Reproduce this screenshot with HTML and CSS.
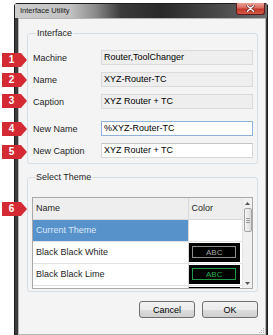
FILE: index.html
```html
<!DOCTYPE html>
<html lang="en">
<head>
    <meta charset="UTF-8">
    <meta name="viewport" content="width=device-width, initial-scale=1.0">
    <title>Interface Utility</title>
    <link rel="stylesheet" href="styles.css">
</head>
<body>
    <div class="screen">
        <div class="window">
            <div class="titlebar">
                <span class="title">Interface Utility</span>
                <span class="close">
                    <svg width="9" height="7" viewBox="0 0 9 7">
                        <path d="M1.5 0.8 L7.5 6.2 M7.5 0.8 L1.5 6.2" stroke="#5a1a1a" stroke-width="2.6" stroke-linecap="round"/>
                        <path d="M1.5 0.8 L7.5 6.2 M7.5 0.8 L1.5 6.2" stroke="#fff" stroke-width="1.5" stroke-linecap="round"/>
                    </svg>
                </span>
            </div>
            <div class="client">
                <fieldset class="group group-interface">
                    <legend>Interface</legend>
                    <div class="row">
                        <span class="label">Machine</span>
                        <div class="field readonly">Router,ToolChanger</div>
                    </div>
                    <div class="row">
                        <span class="label">Name</span>
                        <div class="field readonly">XYZ-Router-TC</div>
                    </div>
                    <div class="row">
                        <span class="label">Caption</span>
                        <div class="field readonly">XYZ Router + TC</div>
                    </div>
                    <div class="row row-new">
                        <span class="label">New Name</span>
                        <div class="field focused">%XYZ-Router-TC</div>
                    </div>
                    <div class="row">
                        <span class="label">New Caption</span>
                        <div class="field">XYZ Router + TC</div>
                    </div>
                </fieldset>

                <fieldset class="group group-theme">
                    <legend>Select Theme</legend>
                    <div class="grid">
                        <div class="grid-body">
                            <table>
                                <thead>
                                    <tr>
                                        <th class="col-name">Name</th>
                                        <th class="col-color">Color</th>
                                    </tr>
                                </thead>
                                <tbody>
                                    <tr class="selected">
                                        <td class="col-name">Current Theme</td>
                                        <td class="col-color"></td>
                                    </tr>
                                    <tr>
                                        <td class="col-name">Black Black White</td>
                                        <td class="col-color">
                                            <div class="swatch"><span class="swatch-text white">ABC</span></div>
                                        </td>
                                    </tr>
                                    <tr>
                                        <td class="col-name">Black Black Lime</td>
                                        <td class="col-color">
                                            <div class="swatch"><span class="swatch-text lime">ABC</span></div>
                                        </td>
                                    </tr>
                                    <!-- next row, only its top edge shows above the fold -->
                                    <tr>
                                        <td class="col-name"></td>
                                        <td class="col-color">
                                            <div class="swatch"></div>
                                        </td>
                                    </tr>
                                </tbody>
                            </table>
                        </div>
                        <div class="scrollbar">
                            <div class="arrow">
                                <svg width="5" height="3" viewBox="0 0 5 3"><path d="M0 3 L2.5 0 L5 3 Z" fill="#555"/></svg>
                            </div>
                            <div class="thumb"><span class="thumb-grip"></span></div>
                            <div class="track"></div>
                            <div class="arrow">
                                <svg width="5" height="3" viewBox="0 0 5 3"><path d="M0 0 L2.5 3 L5 0 Z" fill="#555"/></svg>
                            </div>
                        </div>
                    </div>
                </fieldset>

                <div class="buttons">
                    <button class="btn">Cancel</button>
                    <button class="btn">OK</button>
                </div>

                <svg class="grip" width="7" height="7" viewBox="0 0 7 7">
                    <rect x="5" y="1" width="1" height="1" fill="#b0b0b0"/>
                    <rect x="3" y="3" width="1" height="1" fill="#b0b0b0"/>
                    <rect x="5" y="3" width="1" height="1" fill="#b0b0b0"/>
                    <rect x="1" y="5" width="1" height="1" fill="#b0b0b0"/>
                    <rect x="3" y="5" width="1" height="1" fill="#b0b0b0"/>
                    <rect x="5" y="5" width="1" height="1" fill="#b0b0b0"/>
                </svg>
            </div>
        </div>

        <!-- callout markers -->
        <span class="badge b1">1</span>
        <span class="badge b2">2</span>
        <span class="badge b3">3</span>
        <span class="badge b4">4</span>
        <span class="badge b5">5</span>
        <span class="badge b6">6</span>
    </div>
</body>
</html>
```

FILE: styles.css
```css
body {
    margin: 0;
    background: #fff;
    font-family: "Liberation Sans", Arial, sans-serif;
    font-size: 9px;
    color: #1e1e1e;
}

.screen {
    position: relative;
    padding: 3px 0 0 14px;
}

.window {
    width: 254px;
    box-sizing: border-box;
    border: 1px solid #1c1c1c;
    border-radius: 3px 3px 0 0;
    background: #3c3c3c;
    padding: 0 1px 4px 3px;
}

.titlebar {
    display: flex;
    align-items: flex-start;
    height: 14px;
    margin: 0 -1px 0 -3px;
    padding-left: 5px;
    background: linear-gradient(to right, #cdcdcd 0%, #c2c2c2 22%, #8a8a8a 32%, #3a3a3a 42%, #2a2a2a 58%, #454545 78%, #6c6c6c 100%);
}

.title {
    flex: 1;
    font-size: 7.5px;
    line-height: 14px;
    color: #1a1a1a;
}

.close {
    display: flex;
    align-items: center;
    justify-content: center;
    width: 29px;
    height: 12px;
    margin: -1px 2px 0 0;
    box-sizing: border-box;
    border: 1px solid #5e1c1c;
    border-top: none;
    border-radius: 0 0 3px 3px;
    background: linear-gradient(#eaa198 0%, #d96a5e 45%, #c2382b 55%, #d65a48 100%);
}

.client {
    position: relative;
    height: 307px;
    border: 1px solid #b5b5b5;
    background: #f4f4f4;
    padding: 8px 7px 0 8px;
    box-sizing: content-box;
}

/* group boxes */
.group {
    margin: 0;
    padding: 0;
    border: 1px solid #d5dfe5;
    border-radius: 3px;
    min-width: 0;
}

.group legend {
    margin-left: 3px;
    padding: 0 1px;
    line-height: 12px;
    font-size: 9px;
    color: #1e1e1e;
}

.group-interface {
    display: flex;
    flex-direction: column;
    gap: 7px;
    padding: 11px 4px 5px 5px;
}

.group-theme {
    margin-top: 7px;
    padding: 14px 4px 2px 4px;
}

.row {
    display: flex;
    align-items: center;
}

.row-new {
    margin-top: 5px;
}

.label {
    width: 68px;
    flex-shrink: 0;
    color: #1e1e1e;
}

.field {
    width: 152px;
    height: 15px;
    box-sizing: border-box;
    border: 1px solid #d6d6d6;
    border-top-color: #c4c4c4;
    background: #fff;
    padding: 0 2px;
    line-height: 13px;
    color: #000;
    white-space: nowrap;
}

.field.readonly {
    background: #eeeeee;
    border-color: #dadada;
}

.field.focused {
    border-color: #8fb2da;
}

/* theme grid */
.grid {
    display: flex;
    height: 92px;
    box-sizing: border-box;
    border: 1px solid #a9a9a9;
    background: #fff;
}

.grid-body {
    width: 209px;
    overflow: hidden;
}

.grid table {
    width: 209px;
    table-layout: fixed;
    border-collapse: collapse;
}

.grid th {
    height: 21px;
    box-sizing: border-box;
    padding: 0 3px;
    text-align: left;
    font-weight: normal;
    background: #eeeeee;
    border-bottom: 1px solid #d9d9d9;
    color: #1e1e1e;
}

.grid td {
    height: 22px;
    box-sizing: border-box;
    padding: 0 3px;
    border-bottom: 1px solid #e2e2e2;
    color: #1e1e1e;
    white-space: nowrap;
}

.grid th.col-name,
.grid td.col-name {
    width: 155px;
    border-right: 1px solid #d9d9d9;
}

.grid td.col-color {
    padding: 1px 2px 1px 0;
}

.grid tr.selected td.col-name {
    background: #5892cb;
    color: #dbe9f8;
}

.swatch {
    display: flex;
    align-items: center;
    justify-content: center;
    height: 19px;
    background: #000;
}

.swatch-text {
    display: flex;
    align-items: center;
    justify-content: center;
    width: 44px;
    height: 12px;
    box-sizing: border-box;
    border: 1px solid #8c8c8c;
    font-size: 8px;
    color: #a6a6a6;
}

.swatch-text.lime {
    border-color: #1f9a45;
    color: #26b152;
}

.scrollbar {
    display: flex;
    flex-direction: column;
    width: 10px;
    background: #f0f0f0;
    border-left: 1px solid #e6e6e6;
    box-sizing: border-box;
}

.arrow {
    display: flex;
    align-items: center;
    justify-content: center;
    height: 10px;
}

.thumb {
    display: flex;
    align-items: center;
    justify-content: center;
    height: 24px;
    margin: 0 0 0 1px;
    border: 1px solid #a3a3a3;
    border-radius: 2px;
    background: linear-gradient(to right, #f5f5f5, #dcdcdc);
    box-sizing: border-box;
}

.thumb-grip {
    width: 4px;
    height: 5px;
    background: repeating-linear-gradient(#9a9a9a 0, #9a9a9a 1px, transparent 1px, transparent 2px);
}

.track {
    flex: 1;
}

/* dialog buttons */
.buttons {
    display: flex;
    justify-content: flex-end;
    gap: 7px;
    margin-top: 9px;
}

.btn {
    width: 56px;
    height: 17px;
    padding: 0;
    border: 1px solid #707070;
    border-radius: 3px;
    background: linear-gradient(#f2f2f2 0%, #ebebeb 50%, #dddddd 51%, #cfcfcf 100%);
    font-family: "Liberation Sans", Arial, sans-serif;
    font-size: 9px;
    color: #000;
}

.grip {
    position: absolute;
    right: 0;
    bottom: 0;
}

/* red numbered callouts */
.badge {
    position: absolute;
    left: 2px;
    width: 25px;
    height: 14px;
    padding-right: 6px;
    box-sizing: border-box;
    clip-path: polygon(0 0, 19px 0, 25px 50%, 19px 100%, 0 100%);
    background: #d42a33;
    color: #fff;
    font-family: "Liberation Sans", Arial, sans-serif;
    font-weight: bold;
    font-size: 10px;
    line-height: 14px;
    text-align: center;
}

.b1 { top: 53px; }
.b2 { top: 73px; }
.b3 { top: 94px; }
.b4 { top: 122px; }
.b5 { top: 145px; }
.b6 { top: 202px; }
```
